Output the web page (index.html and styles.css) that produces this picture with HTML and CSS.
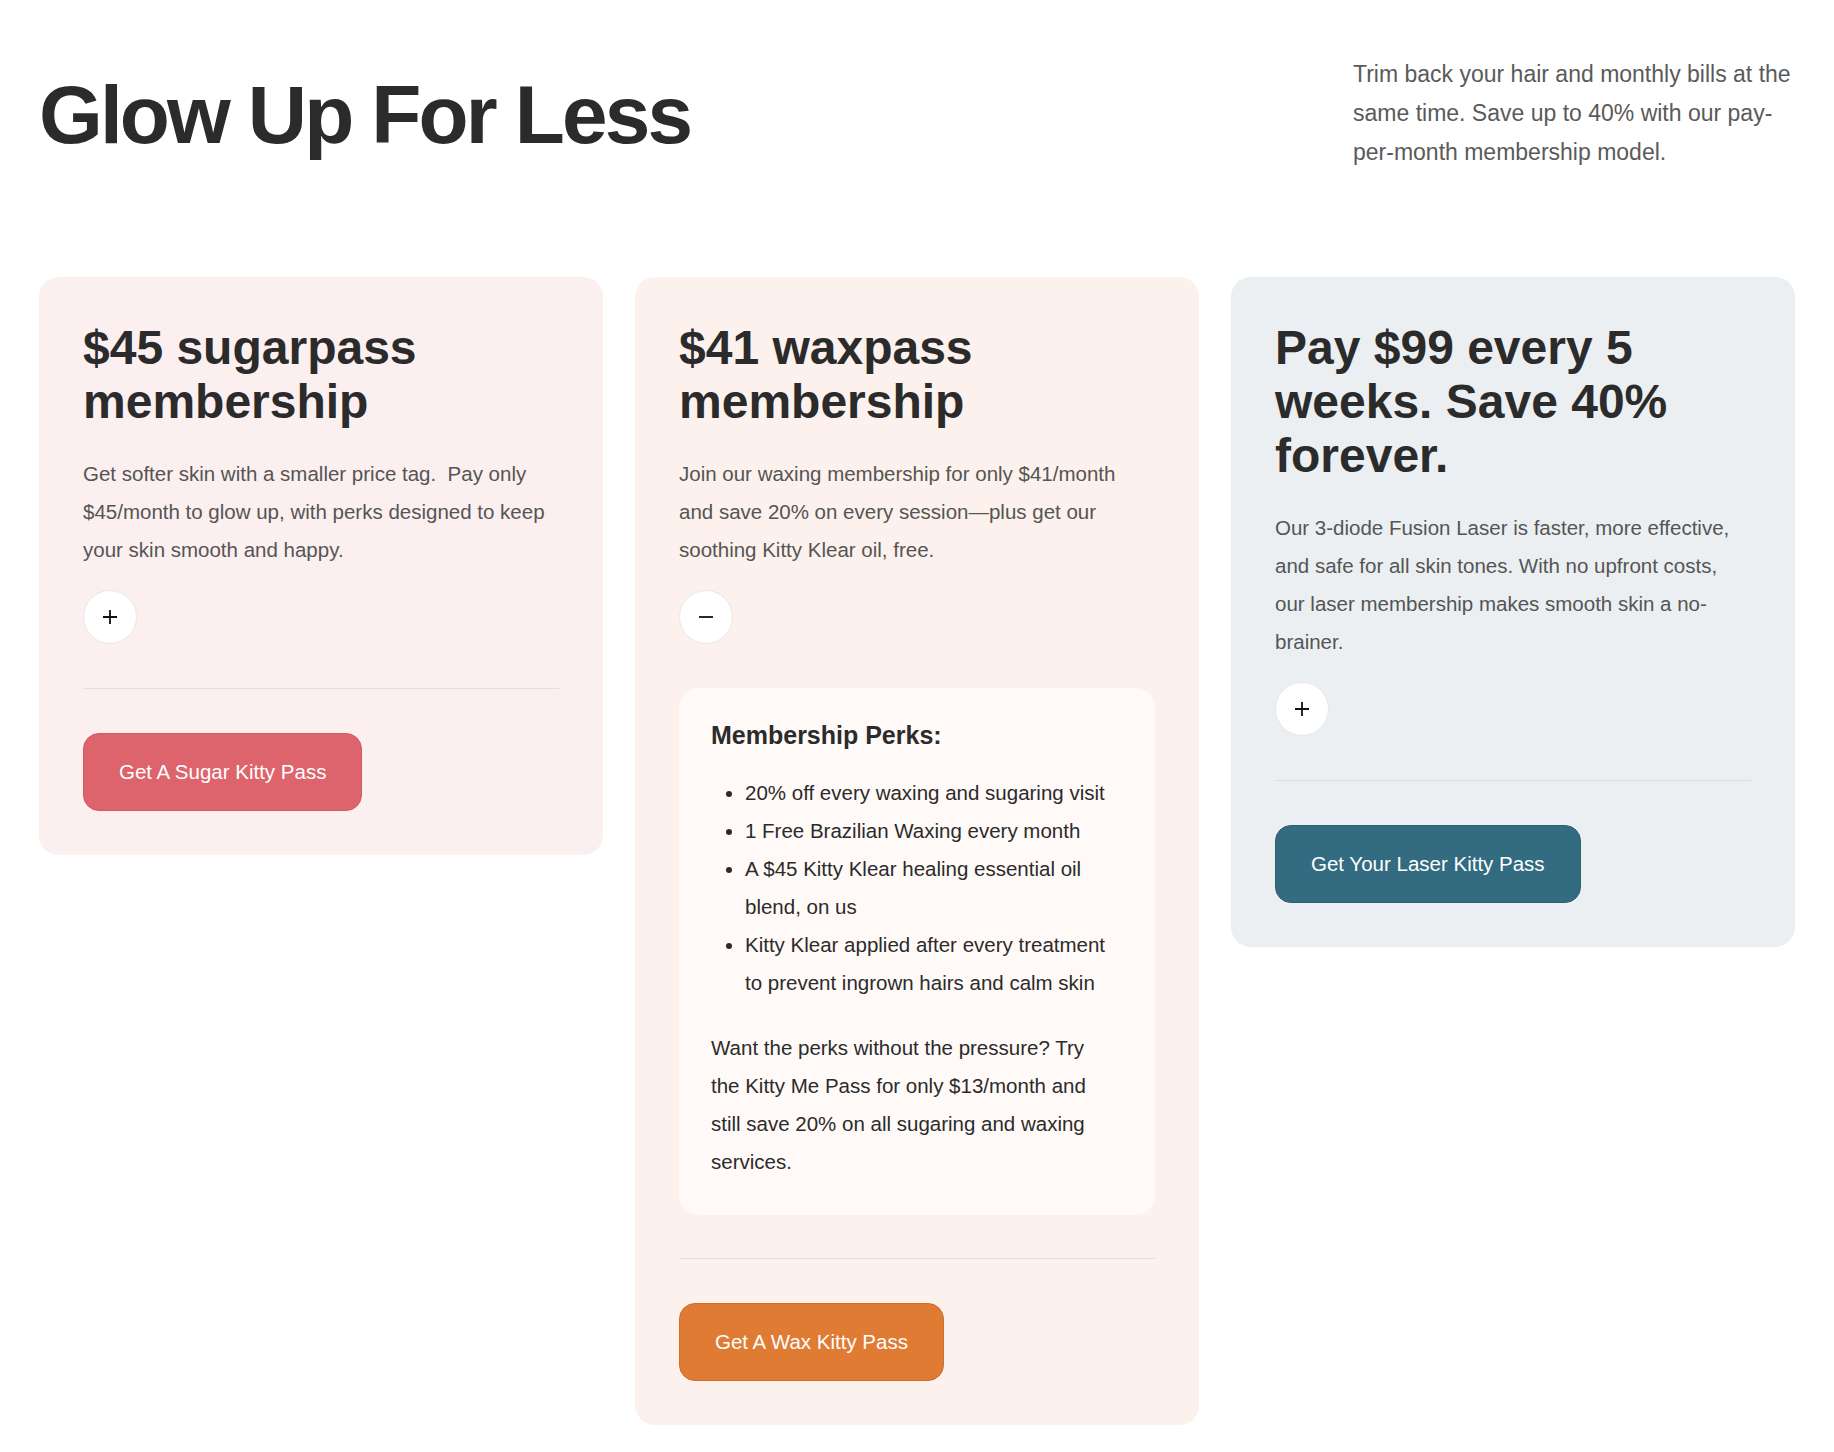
FILE: index.html
```html
<!DOCTYPE html>
<html lang="en">
<head>
    <meta charset="UTF-8">
    <meta name="viewport" content="width=device-width, initial-scale=1.0">
    <title>Memberships - Glow Up For Less</title>
    <link rel="stylesheet" href="styles.css">
</head>
<body>
    <div class="page">
        <header class="intro">
            <h1>Glow Up For Less</h1>
            <p class="intro-text">Trim back your hair and monthly bills at the same time. Save up to 40% with our pay-per-month membership model.</p>
        </header>

        <div class="plans">
            <div class="plan plan-sugar">
                <h3>$45 sugarpass membership</h3>
                <p class="plan-text">Get softer skin with a smaller price tag.&nbsp; Pay only $45/month to glow up, with perks designed to keep your skin smooth and happy.</p>
                <button class="toggle" type="button" aria-label="Show perks">
                    <svg width="16" height="16" viewBox="0 0 16 16"><path d="M8 1v14M1 8h14" stroke="#111" stroke-width="1.8" fill="none"/></svg>
                </button>
                <hr>
                <a href="#" class="cta">Get A Sugar Kitty Pass</a>
            </div>

            <div class="plan plan-wax">
                <h3>$41 waxpass membership</h3>
                <p class="plan-text">Join our waxing membership for only $41/month and save 20% on every session—plus get our soothing Kitty Klear oil, free.</p>
                <button class="toggle" type="button" aria-label="Hide perks">
                    <svg width="16" height="16" viewBox="0 0 16 16"><path d="M1 8h14" stroke="#111" stroke-width="1.8" fill="none"/></svg>
                </button>
                <div class="perks">
                    <h4>Membership Perks:</h4>
                    <ul>
                        <li>20% off every waxing and sugaring visit</li>
                        <li>1 Free Brazilian Waxing every month</li>
                        <li>A $45 Kitty Klear healing essential oil blend, on us</li>
                        <li>Kitty Klear applied after every treatment to prevent ingrown hairs and calm skin</li>
                    </ul>
                    <p>Want the perks without the pressure? Try the Kitty Me Pass for only $13/month and still save 20% on all sugaring and waxing services.</p>
                </div>
                <hr>
                <a href="#" class="cta">Get A Wax Kitty Pass</a>
            </div>

            <div class="plan plan-laser">
                <h3>Pay $99 every 5 weeks. Save 40% forever.</h3>
                <p class="plan-text">Our 3-diode Fusion Laser is faster, more effective, and safe for all skin tones. With no upfront costs, our laser membership makes smooth skin a no-brainer.</p>
                <button class="toggle" type="button" aria-label="Show perks">
                    <svg width="16" height="16" viewBox="0 0 16 16"><path d="M8 1v14M1 8h14" stroke="#111" stroke-width="1.8" fill="none"/></svg>
                </button>
                <hr>
                <a href="#" class="cta">Get Your Laser Kitty Pass</a>
            </div>
        </div>
    </div>
</body>
</html>
```

FILE: styles.css
```css
body {
    margin: 0;
    background-color: #fff;
    font-family: "Liberation Sans", Arial, sans-serif;
    color: #2b2b2b;
}

.page {
    padding: 55px 39px 26px;
}

.intro {
    display: flex;
    justify-content: space-between;
    align-items: flex-start;
    margin-bottom: 105px;
}

h1 {
    margin: 15px 0 0;
    font-size: 82px;
    line-height: 90px;
    font-weight: bold;
    letter-spacing: -0.035em;
    color: #2b2b2b;
}

.intro-text {
    width: 442px;
    margin: 0;
    font-size: 23px;
    line-height: 39px;
    color: #5a5a5a;
}

.plans {
    display: flex;
    align-items: flex-start;
    gap: 32px;
}

.plan {
    flex: 1;
    display: flex;
    flex-direction: column;
    align-items: flex-start;
    padding: 44px;
    border-radius: 20px;
}

.plan-sugar {
    background-color: #fcefef;
}

.plan-wax {
    background-color: #fcf1ec;
}

.plan-laser {
    background-color: #ebeff1;
}

.plan h3 {
    margin: 0;
    font-size: 48px;
    line-height: 54px;
    font-weight: bold;
    color: #2b2b2b;
}

.plan-text {
    margin: 26px 0 0;
    font-size: 20.5px;
    line-height: 38px;
    color: #555;
}

.toggle {
    display: flex;
    justify-content: center;
    align-items: center;
    width: 54px;
    height: 54px;
    margin-top: 21px;
    padding: 0;
    border: 1px solid #ebe7e7;
    border-radius: 50%;
    background-color: #fff;
    cursor: pointer;
}

.perks {
    align-self: stretch;
    margin-top: 44px;
    padding: 32px 42px 34px 32px;
    border-radius: 20px;
    background-color: #fffaf7;
}

.perks h4 {
    margin: 0;
    font-size: 25px;
    line-height: 30px;
    font-weight: bold;
}

.perks ul {
    margin: 24px 0 0;
    padding-left: 34px;
}

.perks li,
.perks p {
    font-size: 20.5px;
    line-height: 38px;
    color: #2b2b2b;
}

.perks p {
    margin: 27px 0 0;
}

hr {
    align-self: stretch;
    margin: 44px 0 0;
    border: none;
    border-top: 1px solid rgba(0, 0, 0, 0.08);
}

.perks + hr {
    margin-top: 43px;
}

.cta {
    display: inline-block;
    margin-top: 44px;
    padding: 26px 35px;
    border: 1px solid transparent;
    border-radius: 16px;
    font-size: 20.5px;
    line-height: 24px;
    color: #fff;
    text-decoration: none;
}

.plan-sugar .cta {
    background-color: #dd646c;
    border-color: #d15a63;
}

.plan-wax .cta {
    background-color: #e07b33;
    border-color: #cf6d2a;
}

.plan-laser .cta {
    background-color: #336b80;
    border-color: #2c6174;
}
```
